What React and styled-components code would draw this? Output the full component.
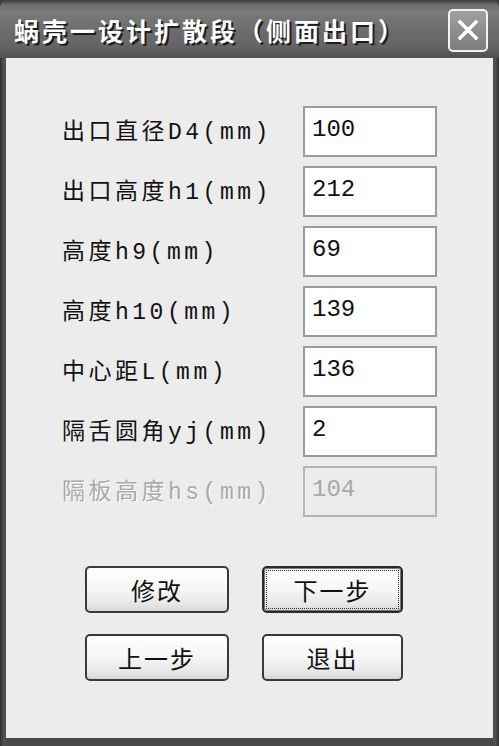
import React from 'react';
import styled, { createGlobalStyle } from 'styled-components';

const GlobalStyle = createGlobalStyle`
  html, body {
    margin: 0;
    padding: 0;
    background: #3a3a3a;
  }
`;

const Window = styled.div`
  width: 499px;
  height: 746px;
  display: flex;
  flex-direction: column;
  box-sizing: border-box;
  background: linear-gradient(90deg, #2e2e2e 0, #555 4px, #4a4a4a 6px, #4a4a4a 493px, #555 495px, #2e2e2e 499px);
  border-radius: 7px 7px 0 0;
  overflow: hidden;
`;

const TitleBar = styled.div`
  height: 58px;
  flex: none;
  display: flex;
  align-items: center;
  justify-content: space-between;
  padding: 2px 11px 0 14px;
  box-sizing: border-box;
  background: linear-gradient(180deg, #3e3e3e 0, #6f6f6f 5px, #7a7a7a 12px, #6d6d6d 30px, #636363 48px, #4f4f4f 58px);
`;

const Title = styled.h1`
  margin: 0;
  font-family: "Noto Sans CJK SC", "Liberation Sans", sans-serif;
  font-size: 25px;
  font-weight: 700;
  letter-spacing: 3px;
  color: #fff;
  text-shadow: 2px 2px 0 #1e1e1e;
  line-height: 1;
`;

const CloseButton = styled.div`
  width: 36px;
  height: 39px;
  border: 2px solid #f2f2f2;
  border-radius: 5px;
  background: linear-gradient(180deg, #a0a0a0, #8a8a8a 60%, #7c7c7c);
  display: flex;
  align-items: center;
  justify-content: center;
`;

const Content = styled.div`
  flex: 1;
  margin: 0 6px 8px 6px;
  background: #ececec;
  padding: 48px 0 0 56px;
`;

const Form = styled.div`
  display: grid;
  grid-template-columns: 241px 134px;
  row-gap: 9px;
  align-items: center;
`;

const Label = styled.label`
  font-family: "Liberation Mono", "Noto Sans CJK SC", monospace;
  font-size: 23px;
  letter-spacing: 3.5px;
  color: ${p => (p.$disabled ? '#a9a9a9' : '#111')};
  text-shadow: ${p => (p.$disabled ? '1px 1px 0 #fff' : 'none')};
  line-height: 1;
  padding-top: 4px;
`;

const Field = styled.div`
  height: 51px;
  box-sizing: border-box;
  border: 2px solid ${p => (p.$disabled ? '#b4b4b4' : '#9a9a9a')};
  background: ${p => (p.$disabled ? '#ececec' : '#fff')};
  padding: 9px 0 0 7px;
  font-family: "Liberation Mono", monospace;
  font-size: 24px;
  line-height: 26px;
  color: ${p => (p.$disabled ? '#a8a8a8' : '#111')};
`;

const Buttons = styled.div`
  display: grid;
  grid-template-columns: 144px 141px;
  column-gap: 33px;
  row-gap: 21px;
  margin: 49px 0 0 23px;
`;

const Button = styled.div`
  height: 47px;
  box-sizing: border-box;
  border: ${p => (p.$focused ? '2px solid #2a2a2a' : '2px solid #3a3a3a')};
  border-radius: 5px;
  background: linear-gradient(180deg, #fff 0, #f6f6f6 50%, #e6e6e6 85%, #d6d6d6 100%);
  display: flex;
  align-items: center;
  justify-content: center;
  padding: 2px;
  font-family: "Noto Sans CJK SC", "Liberation Sans", sans-serif;
  font-size: 24px;
  letter-spacing: 2px;
  color: #111;
  box-shadow: ${p => (p.$focused ? 'inset 0 0 0 1px #777' : 'none')};
`;

const FocusRing = styled.span`
  flex: 1;
  align-self: stretch;
  display: flex;
  align-items: center;
  justify-content: center;
  border: ${p => (p.$focused ? '1px dotted #333' : '1px solid transparent')};
`;

const fields = [
  { label: '出口直径D4(mm)', value: '100' },
  { label: '出口高度h1(mm)', value: '212' },
  { label: '高度h9(mm)', value: '69' },
  { label: '高度h10(mm)', value: '139' },
  { label: '中心距L(mm)', value: '136' },
  { label: '隔舌圆角yj(mm)', value: '2' },
  { label: '隔板高度hs(mm)', value: '104', disabled: true },
];

const buttons = [
  { text: '修改' },
  { text: '下一步', focused: true },
  { text: '上一步' },
  { text: '退出' },
];

export default function App() {
  return (
    <>
      <GlobalStyle />
      <Window>
        <TitleBar>
          <Title>蜗壳一设计扩散段（侧面出口）</Title>
          <CloseButton>
            <svg width="24" height="24" viewBox="0 0 24 24">
              <path d="M4 4 L20 20 M20 4 L4 20" stroke="#fff" strokeWidth="3.5" strokeLinecap="square" />
            </svg>
          </CloseButton>
        </TitleBar>
        <Content>
          <Form>
            {fields.map(f => (
              <React.Fragment key={f.label}>
                <Label $disabled={f.disabled}>{f.label}</Label>
                <Field $disabled={f.disabled}>{f.value}</Field>
              </React.Fragment>
            ))}
          </Form>
          <Buttons>
            {buttons.map(b => (
              <Button key={b.text} $focused={b.focused}>
                <FocusRing $focused={b.focused}>{b.text}</FocusRing>
              </Button>
            ))}
          </Buttons>
        </Content>
      </Window>
    </>
  );
}
